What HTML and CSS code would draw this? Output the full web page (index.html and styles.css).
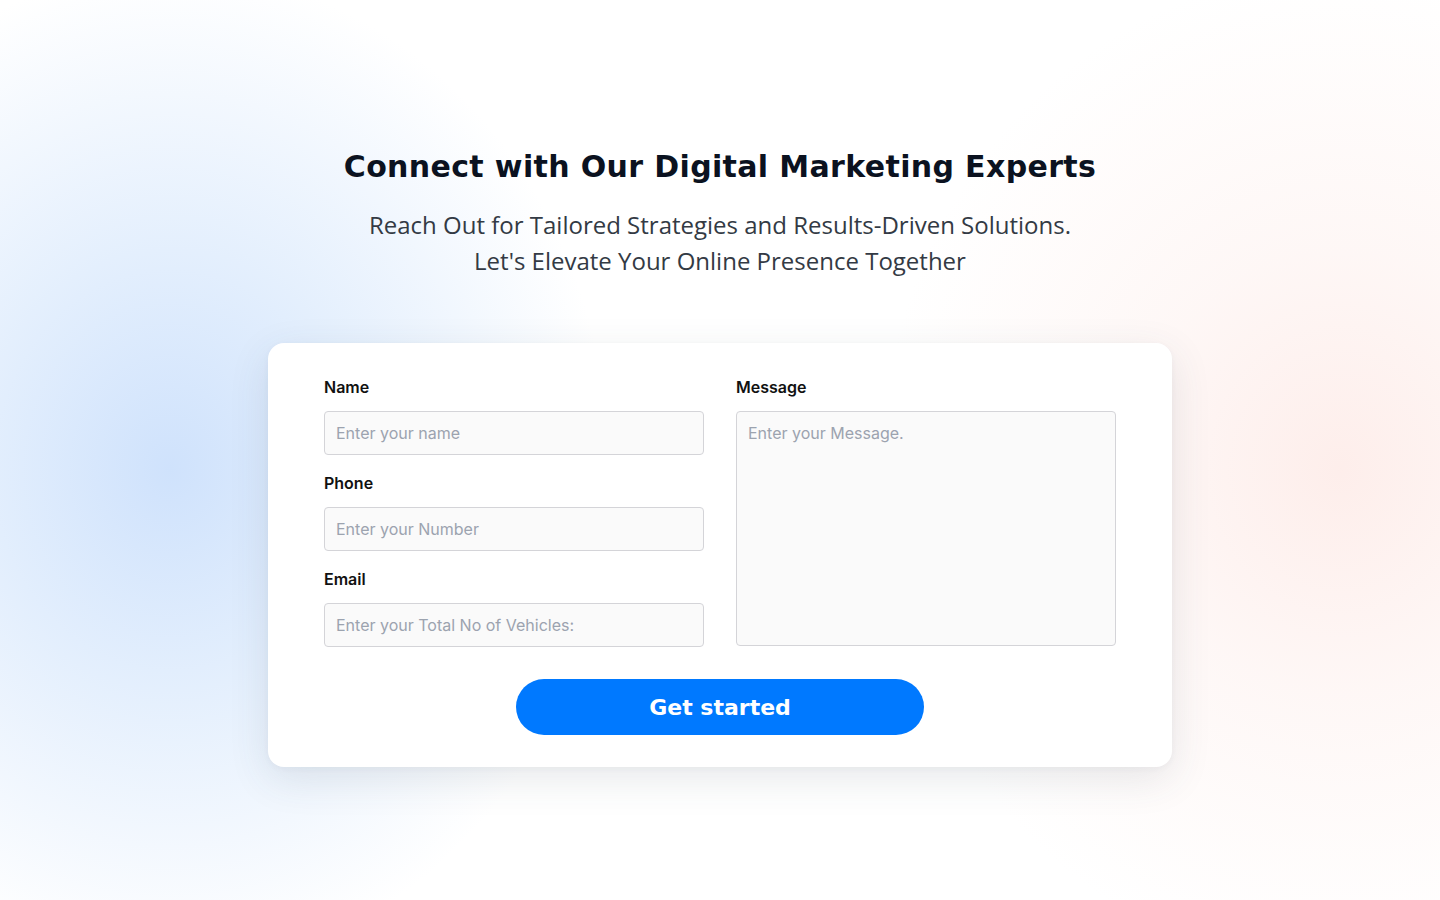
FILE: index.html
```html
<!DOCTYPE html>
<html lang="en">
<head>
<meta charset="utf-8">
<title>Connect with Our Digital Marketing Experts</title>
<link rel="stylesheet" href="styles.css">
</head>
<body>
<main class="page">
  <header class="intro">
    <h1 class="title">Connect with Our Digital Marketing Experts</h1>
    <p class="subtitle">Reach Out for Tailored Strategies and Results-Driven Solutions.<br>Let's Elevate Your Online Presence Together</p>
  </header>
  <form class="card">
    <div class="grid">
      <div class="col">
        <div class="field">
          <label class="label" for="name">Name</label>
          <input class="input" id="name" type="text" placeholder="Enter your name">
        </div>
        <div class="field">
          <label class="label" for="phone">Phone</label>
          <input class="input" id="phone" type="text" placeholder="Enter your Number">
        </div>
        <div class="field">
          <label class="label" for="email">Email</label>
          <input class="input" id="email" type="text" placeholder="Enter your Total No of Vehicles:">
        </div>
      </div>
      <div class="col">
        <div class="field">
          <label class="label" for="msg">Message</label>
          <textarea class="input textarea" id="msg" placeholder="Enter your Message."></textarea>
        </div>
      </div>
    </div>
    <div class="actions">
      <button class="btn" type="button">Get started</button>
    </div>
  </form>
</main>
</body>
</html>
```
FILE: styles.css
```css
* { box-sizing: border-box; }
html, body { margin: 0; padding: 0; }
body {
  width: 1440px;
  height: 900px;
  overflow: hidden;
  font-family: "Inter", "Liberation Sans", sans-serif;
  background:
    radial-gradient(ellipse 440px 500px at 170px 470px, rgba(207, 226, 252, 1) 0%, rgba(214, 231, 252, 0.65) 45%, rgba(255,255,255,0) 100%),
    radial-gradient(ellipse 460px 500px at 1340px 470px, rgba(253, 232, 228, 0.75) 0%, rgba(253, 238, 235, 0.45) 45%, rgba(255,255,255,0) 100%),
    #ffffff;
}
.page {
  display: flex;
  flex-direction: column;
  align-items: center;
  padding-top: 145px;
}
.intro { text-align: center; }
.title {
  margin: 0;
  font-family: "DejaVu Sans", "Liberation Sans", sans-serif;
  font-weight: 700;
  font-size: 30px;
  line-height: 44px;
  color: #0b1220;
  letter-spacing: 0.35px;
}
.subtitle {
  margin: 18px 0 0;
  font-family: "Open Sans", "Liberation Sans", sans-serif;
  font-size: 24px;
  line-height: 36px;
  color: #333a44;
}
.card {
  margin-top: 64px;
  width: 904px;
  background: #ffffff;
  border-radius: 16px;
  padding: 32px 56px 32px;
  box-shadow: 0 12px 40px rgba(60, 70, 90, 0.12), 0 2px 6px rgba(60, 70, 90, 0.04);
}
.grid {
  display: grid;
  grid-template-columns: 380px 380px;
  column-gap: 32px;
  align-items: start;
}
.col { display: flex; flex-direction: column; gap: 16px; }
.field { display: flex; flex-direction: column; }
.label {
  font-size: 16px;
  font-weight: 600;
  line-height: 24px;
  color: #111111;
  margin-bottom: 12px;
}
.input {
  width: 380px;
  height: 44px;
  border: 1px solid #d4d4d8;
  border-radius: 4px;
  background: #fafafa;
  padding: 0 11px;
  font-family: "Inter", "Liberation Sans", sans-serif;
  font-size: 16px;
  color: #111;
  outline: none;
}
.input::placeholder { color: #9ca3af; }
.textarea {
  height: 235px;
  resize: none;
  padding: 10px 11px;
  line-height: 22px;
}
.actions {
  display: flex;
  justify-content: center;
  margin-top: 32px;
}
.btn {
  width: 408px;
  height: 56px;
  border: none;
  border-radius: 28px;
  background: #0079ff;
  color: #ffffff;
  font-family: "DejaVu Sans", "Liberation Sans", sans-serif;
  font-weight: 700;
  font-size: 22px;
  cursor: pointer;
}
```
